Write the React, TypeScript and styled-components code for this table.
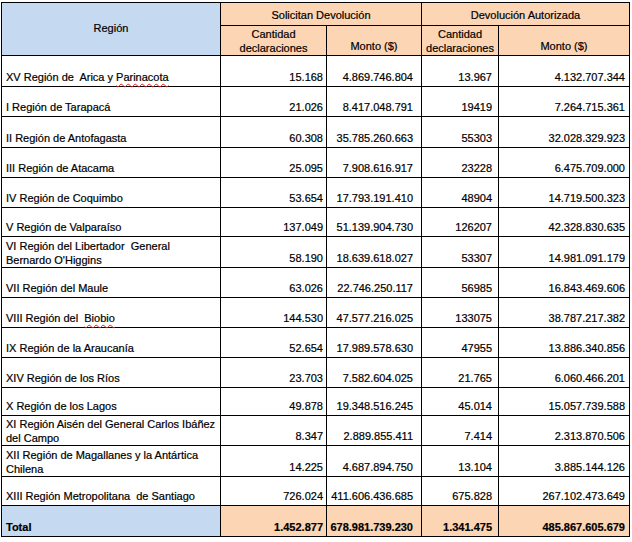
import React from "react";
import styled, { createGlobalStyle } from "styled-components";

const GlobalStyle = createGlobalStyle`
  html, body { margin: 0; padding: 0; background: #fff; }
  body { font-family: "Liberation Sans", Arial, sans-serif; }
`;

const BLUE = "#c5d9f1";
const ORANGE = "#fcd5b4";

const Page = styled.div`
  padding: 2px 0 0 1px;
`;

const Table = styled.table`
  border-collapse: collapse;
  table-layout: fixed;
  width: 628px;
  font-size: 11px;
  line-height: 14px;
  color: #000;
  border: 1.5px solid #000;
  -webkit-text-stroke: 0.2px #000;
`;

const HeadRow = styled.tr<{ $h: number }>`
  height: ${(p) => p.$h}px;
`;

const HeadCell = styled.th<{ $tone: "blue" | "orange"; $middle?: boolean; $pb: number }>`
  background: ${(p) => (p.$tone === "blue" ? BLUE : ORANGE)};
  border: 1px solid #000;
  font-weight: normal;
  text-align: center;
  vertical-align: ${(p) => (p.$middle ? "middle" : "bottom")};
  padding: 0 2px ${(p) => p.$pb}px;
  box-sizing: border-box;
`;

const Row = styled.tr<{ $h: number }>`
  height: ${(p) => p.$h}px;
`;

const RegionCell = styled.td<{ $total?: boolean; $multi?: boolean }>`
  border: 1px solid #000;
  background: ${(p) => (p.$total ? BLUE : "#fff")};
  font-weight: ${(p) => (p.$total ? "bold" : "normal")};
  text-align: left;
  vertical-align: bottom;
  padding: 0 2px ${(p) => (p.$multi ? 0 : 2)}px 4px;
  white-space: nowrap;
`;

const NumCell = styled.td<{ $total?: boolean; $pr: number }>`
  border: 1px solid #000;
  background: ${(p) => (p.$total ? ORANGE : "#fff")};
  font-weight: ${(p) => (p.$total ? "bold" : "normal")};
  text-align: right;
  vertical-align: bottom;
  padding: 0 ${(p) => p.$pr}px 2px 2px;
  white-space: nowrap;
`;

const Misspelled = styled.span`
  text-decoration: underline wavy #e02020;
  text-decoration-thickness: 1px;
  text-underline-offset: 2px;
`;

type Item = {
  region: React.ReactNode;
  h: number;
  multi?: boolean;
  values: [string, string, string, string];
};

const pads = [3, 8, 6, 4];

const rows: Item[] = [
  {
    region: (
      <>
        XV Región de&nbsp; Arica y <Misspelled>Parinacota</Misspelled>
      </>
    ),
    h: 31,
    values: ["15.168", "4.869.746.804", "13.967", "4.132.707.344"],
  },
  { region: "I Región de Tarapacá", h: 30, values: ["21.026", "8.417.048.791", "19419", "7.264.715.361"] },
  { region: "II Región de Antofagasta", h: 31, values: ["60.308", "35.785.260.663", "55303", "32.028.329.923"] },
  { region: "III Región de Atacama", h: 30, values: ["25.095", "7.908.616.917", "23228", "6.475.709.000"] },
  { region: "IV Región de Coquimbo", h: 30, values: ["53.654", "17.793.191.410", "48904", "14.719.500.323"] },
  { region: "V Región de Valparaíso", h: 29, values: ["137.049", "51.139.904.730", "126207", "42.328.830.635"] },
  {
    region: (
      <>
        VI Región del Libertador&nbsp; General
        <br />
        Bernardo O'Higgins
      </>
    ),
    h: 31,
    multi: true,
    values: ["58.190", "18.639.618.027", "53307", "14.981.091.179"],
  },
  { region: "VII Región del Maule", h: 30, values: ["63.026", "22.746.250.117", "56985", "16.843.469.606"] },
  {
    region: (
      <>
        VIII Región del&nbsp; <Misspelled>Biobio</Misspelled>
      </>
    ),
    h: 30,
    values: ["144.530", "47.577.216.025", "133075", "38.787.217.382"],
  },
  { region: "IX Región de la Araucanía", h: 30, values: ["52.654", "17.989.578.630", "47955", "13.886.340.856"] },
  { region: "XIV Región de los Ríos", h: 30, values: ["23.703", "7.582.604.025", "21.765", "6.060.466.201"] },
  { region: "X Región de los Lagos", h: 28, values: ["49.878", "19.348.516.245", "45.014", "15.057.739.588"] },
  {
    region: (
      <>
        XI Región Aisén del General Carlos Ibáñez
        <br />
        del Campo
      </>
    ),
    h: 30,
    multi: true,
    values: ["8.347", "2.889.855.411", "7.414", "2.313.870.506"],
  },
  {
    region: (
      <>
        XII Región de Magallanes y la Antártica
        <br />
        Chilena
      </>
    ),
    h: 31,
    multi: true,
    values: ["14.225", "4.687.894.750", "13.104", "3.885.144.126"],
  },
  {
    region: <>XIII Región Metropolitana&nbsp; de Santiago</>,
    h: 29,
    values: ["726.024", "411.606.436.685", "675.828", "267.102.473.649"],
  },
];

const totals: [string, string, string, string] = [
  "1.452.877",
  "678.981.739.230",
  "1.341.475",
  "485.867.605.679",
];

export default function App() {
  return (
    <>
      <GlobalStyle />
      <Page>
        <Table>
          <colgroup>
            <col style={{ width: 219 }} />
            <col style={{ width: 106 }} />
            <col style={{ width: 95 }} />
            <col style={{ width: 77 }} />
            <col style={{ width: 131 }} />
          </colgroup>
          <thead>
            <HeadRow $h={23}>
              <HeadCell $tone="blue" $middle $pb={3} rowSpan={2}>
                Región
              </HeadCell>
              <HeadCell $tone="orange" $pb={3} colSpan={2}>
                Solicitan Devolución
              </HeadCell>
              <HeadCell $tone="orange" $pb={3} colSpan={2}>
                Devolución Autorizada
              </HeadCell>
            </HeadRow>
            <HeadRow $h={30}>
              <HeadCell $tone="orange" $pb={0}>
                Cantidad
                <br />
                declaraciones
              </HeadCell>
              <HeadCell $tone="orange" $pb={2}>
                Monto ($)
              </HeadCell>
              <HeadCell $tone="orange" $pb={0}>
                Cantidad
                <br />
                declaraciones
              </HeadCell>
              <HeadCell $tone="orange" $pb={2}>
                Monto ($)
              </HeadCell>
            </HeadRow>
          </thead>
          <tbody>
            {rows.map((r, i) => (
              <Row key={i} $h={r.h}>
                <RegionCell $multi={r.multi}>{r.region}</RegionCell>
                {r.values.map((v, j) => (
                  <NumCell key={j} $pr={pads[j]}>
                    {v}
                  </NumCell>
                ))}
              </Row>
            ))}
            <Row $h={31}>
              <RegionCell $total>Total</RegionCell>
              {totals.map((v, j) => (
                <NumCell key={j} $total $pr={pads[j]}>
                  {v}
                </NumCell>
              ))}
            </Row>
          </tbody>
        </Table>
      </Page>
    </>
  );
}
